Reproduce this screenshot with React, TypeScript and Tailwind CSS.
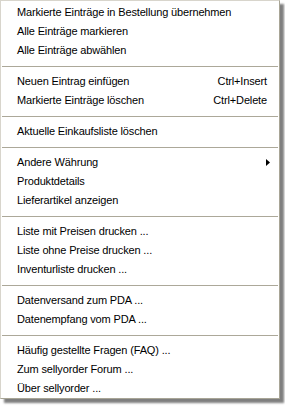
import { FC, ReactElement } from "react";

type Entry =
  | { kind: "item"; label: string; shortcut?: string; submenu?: boolean }
  | { kind: "sep" };

const entries: Entry[] = [
  { kind: "item", label: "Markierte Einträge in Bestellung übernehmen" },
  { kind: "item", label: "Alle Einträge markieren" },
  { kind: "item", label: "Alle Einträge abwählen" },
  { kind: "sep" },
  { kind: "item", label: "Neuen Eintrag einfügen", shortcut: "Ctrl+Insert" },
  { kind: "item", label: "Markierte Einträge löschen", shortcut: "Ctrl+Delete" },
  { kind: "sep" },
  { kind: "item", label: "Aktuelle Einkaufsliste löschen" },
  { kind: "sep" },
  { kind: "item", label: "Andere Währung", submenu: true },
  { kind: "item", label: "Produktdetails" },
  { kind: "item", label: "Lieferartikel anzeigen" },
  { kind: "sep" },
  { kind: "item", label: "Liste mit Preisen drucken ..." },
  { kind: "item", label: "Liste ohne Preise drucken ..." },
  { kind: "item", label: "Inventurliste drucken ..." },
  { kind: "sep" },
  { kind: "item", label: "Datenversand zum PDA ..." },
  { kind: "item", label: "Datenempfang vom PDA ..." },
  { kind: "sep" },
  { kind: "item", label: "Häufig gestellte Fragen (FAQ) ..." },
  { kind: "item", label: "Zum sellyorder Forum ..." },
  { kind: "item", label: "Über sellyorder ..." },
];

const App: FC = (): ReactElement => {
  return (
    <div className="w-[285px] h-[406px] bg-white">
      <div
        className="w-[280px] h-[399px] bg-white border border-t-[#d8d5cc] border-l-[#d8d5cc] border-r-[#a8a596] border-b-[#a8a596] pt-[2px] shadow-[4px_4px_2px_rgba(0,0,0,0.5)] text-[11px] tracking-[-0.15px] text-black leading-none"
        style={{ fontFamily: '"Liberation Sans", Arial, sans-serif' }}
      >
        {entries.map((e, i) =>
          e.kind === "sep" ? (
            <div key={i} className="h-[12px] flex items-center px-[1px]">
              <div className="w-full h-px bg-[#aca899]" />
            </div>
          ) : (
            <div key={i} className="h-[19px] flex items-center pl-[16px] pr-[12px]">
              <span className="flex-1 whitespace-nowrap">{e.label}</span>
              {e.shortcut && <span className="whitespace-nowrap">{e.shortcut}</span>}
              {e.submenu && (
                <svg width="4" height="7" viewBox="0 0 4 7" className="mr-[-3px]">
                  <path d="M0 0 L4 3.5 L0 7 Z" fill="#000" />
                </svg>
              )}
            </div>
          )
        )}
      </div>
    </div>
  );
};

export default App;
